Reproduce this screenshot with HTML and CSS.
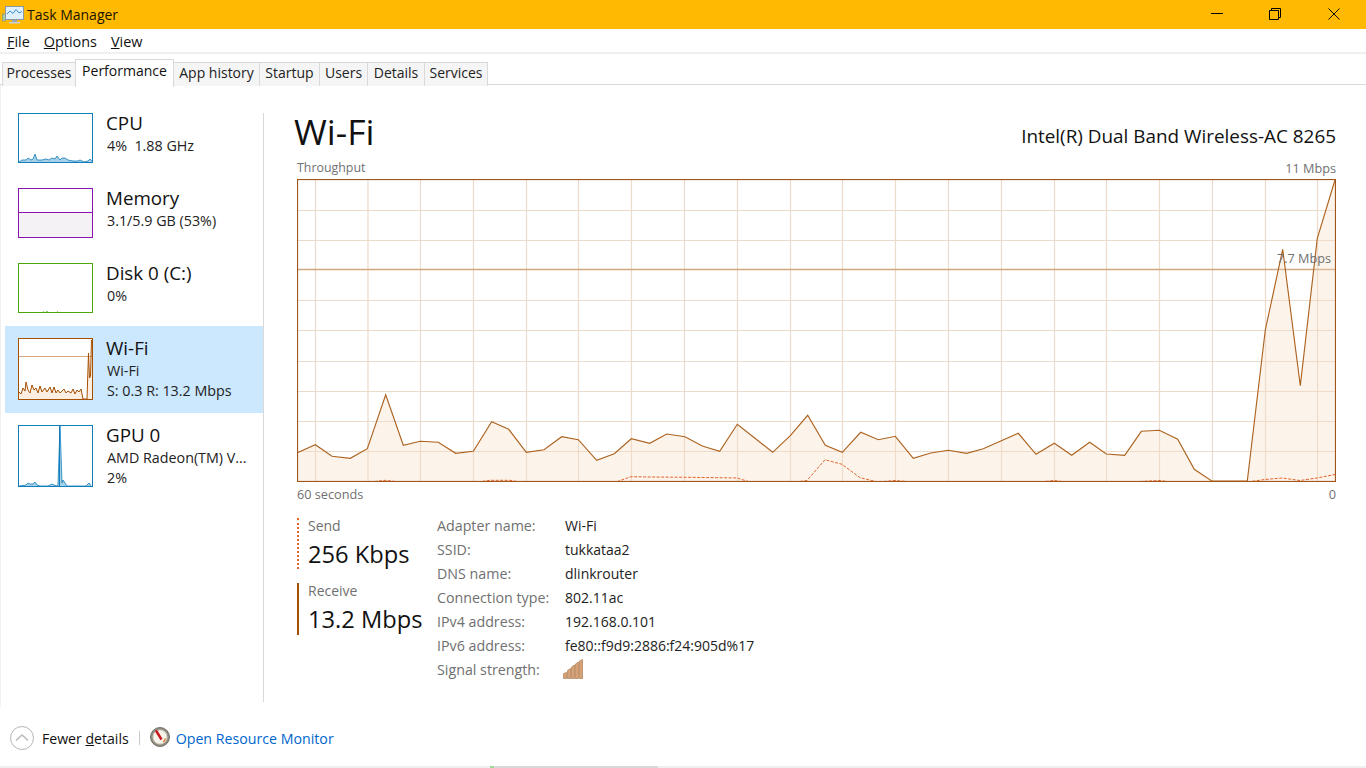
FILE: index.html
```html
<!DOCTYPE html>
<html lang="en">
<head>
<meta charset="utf-8">
<title>Task Manager</title>
<link rel="stylesheet" href="styles.css">
</head>
<body>
<div class="app">
  <header class="titlebar">
    <svg class="appicon" width="22" height="20" viewBox="0 0 22 20">
      <rect x="0.5" y="9" width="3" height="7" fill="#a9c9a0" stroke="#7d8f80" stroke-width=".6"/>
      <rect x="3.5" y="1.5" width="18" height="13" fill="#dff0fb" stroke="#8b97a3"/>
      <polyline points="5,9 8,6 11,8.5 14,4.5 17,8 20,6.5" fill="none" stroke="#3a8fd0" stroke-width="1"/>
      <rect x="10" y="15" width="5" height="2" fill="#9aa6b0"/>
      <rect x="7" y="17" width="11" height="1.5" fill="#c9d2d8"/>
    </svg>
    <span class="apptitle">Task Manager</span>
    <div class="wincontrols">
      <button class="winbtn" aria-label="Minimize"><svg width="12" height="12" viewBox="0 0 12 12"><path d="M0 5.5h12" stroke="#000" fill="none"/></svg></button>
      <button class="winbtn restore" aria-label="Restore"><svg width="12" height="12" viewBox="0 0 12 12"><path d="M.5 2.5h9v9h-9zM2.5 2.5v-2h9v9h-2" stroke="#000" fill="none"/></svg></button>
      <button class="winbtn" aria-label="Close"><svg width="12" height="12" viewBox="0 0 12 12"><path d="M.5.5l11 11M11.5.5l-11 11" stroke="#000" fill="none"/></svg></button>
    </div>
  </header>

  <nav class="menubar">
    <span><u>F</u>ile</span><span><u>O</u>ptions</span><span><u>V</u>iew</span>
  </nav>

  <div class="tabs">
    <div class="tab">Processes</div>
    <div class="tab active">Performance</div>
    <div class="tab">App history</div>
    <div class="tab">Startup</div>
    <div class="tab">Users</div>
    <div class="tab">Details</div>
    <div class="tab">Services</div>
  </div>

  <main class="main">
    <aside class="sidebar">
      <div class="item">
        <svg class="thumb" width="75" height="50" viewBox="0 0 75 50">
          <polygon class="cpu-fill" points="1,49 4,47 8,47 10,45 13,47 15,46 17,41 19,47 24,47 28,46 31,47 34,45 37,46 39,43 42,47 44,45 47,45 50,47 55,48 60,48 62,47 66,49 70,48 72,46 74,48 74,49"/>
          <polyline class="cpu-line" points="1,49 4,47 8,47 10,45 13,47 15,46 17,41 19,47 24,47 28,46 31,47 34,45 37,46 39,43 42,47 44,45 47,45 50,47 55,48 60,48 62,47 66,49 70,48 72,46 74,48"/>
          <rect class="cpu-frame" x=".5" y=".5" width="74" height="49"/>
        </svg>
        <div class="itemtext"><div class="itemtitle">CPU</div><div class="itemsub">4%&nbsp; 1.88 GHz</div></div>
      </div>
      <div class="item">
        <svg class="thumb" width="75" height="50" viewBox="0 0 75 50">
          <rect class="mem-fill" x="1" y="24" width="73" height="25"/>
          <path class="mem-line" d="M1 24.5h73"/>
          <rect class="mem-frame" x=".5" y=".5" width="74" height="49"/>
        </svg>
        <div class="itemtext"><div class="itemtitle">Memory</div><div class="itemsub">3.1/5.9 GB (53%)</div></div>
      </div>
      <div class="item">
        <svg class="thumb" width="75" height="50" viewBox="0 0 75 50">
          <path class="disk-line" d="M25 48.5h1M28 48.5h2M39 48.5h1"/>
          <rect class="disk-frame" x=".5" y=".5" width="74" height="49"/>
        </svg>
        <div class="itemtext"><div class="itemtitle">Disk 0 (C:)</div><div class="itemsub">0%</div></div>
      </div>
      <div class="item selected">
        <svg class="thumb" width="75" height="62" viewBox="0 0 75 62">
          <rect class="wifi-bg" x="1" y="1" width="73" height="60"/>
          <polygon class="wifi-fill" points="1,54 3,56 5,50 7,53 8,44 10,52 12,55 14,47 16,52 18,50 20,55 22,48 24,54 27,50 29,54 32,49 34,55 36,49 38,55 40,52 42,55 44,53 46,51 48,55 50,53 53,55 55,51 57,56 59,52 61,54 63,51 65,61 69,61 70.5,15 71.5,40 72.5,38 73.5,2 74,61 1,61"/>
          <path class="wifi-limit" d="M1 18.5h73"/>
          <polyline class="wifi-line" points="1,54 3,56 5,50 7,53 8,44 10,52 12,55 14,47 16,52 18,50 20,55 22,48 24,54 27,50 29,54 32,49 34,55 36,49 38,55 40,52 42,55 44,53 46,51 48,55 50,53 53,55 55,51 57,56 59,52 61,54 63,51 65,61 69,61 70.5,15 71.5,40 72.5,38 73.5,2"/>
          <rect class="wifi-frame" x=".5" y=".5" width="74" height="61"/>
        </svg>
        <div class="itemtext"><div class="itemtitle">Wi-Fi</div><div class="itemsub">Wi-Fi</div><div class="itemsub">S: 0.3 R: 13.2 Mbps</div></div>
      </div>
      <div class="item tall">
        <svg class="thumb" width="75" height="62" viewBox="0 0 75 62">
          <polygon class="cpu-fill" points="1,61 8,60 10,58 12,59 15,59 17,57 19,60 22,61 30,61 34,59 36,60 39,61 40,60 42,1 44,58 45,55 47,58 49,61 68,61 71,58 73,61"/>
          <polyline class="cpu-line" points="1,61 8,60 10,58 12,59 15,59 17,57 19,60 22,61 30,61 34,59 36,60 39,61 40,60 42,1 44,58 45,55 47,58 49,61 68,61 71,58 73,61"/>
          <path class="cpu-tick" d="M41.5 1v60"/>
          <rect class="cpu-frame" x=".5" y=".5" width="74" height="61"/>
        </svg>
        <div class="itemtext"><div class="itemtitle">GPU 0</div><div class="itemsub">AMD Radeon(TM) V...</div><div class="itemsub">2%</div></div>
      </div>
    </aside>
    <div class="vsep"></div>

    <section class="content">
      <div class="head">
        <h1 class="bigtitle">Wi-Fi</h1>
        <div class="adapter">Intel(R) Dual Band Wireless-AC 8265</div>
      </div>
      <div class="axis axis-top"><span>Throughput</span><span>11 Mbps</span></div>
      <div class="chart">
        <svg class="chartsvg" width="1039" height="303" viewBox="297 179 1039 303">
          <g class="grid">
            <path d="M315.5 180v301M368 180v301M420.5 180v301M473.5 180v301M526.5 180v301M578.5 180v301M631.5 180v301M684.5 180v301M737.5 180v301M790.5 180v301M842.5 180v301M895.5 180v301M948.5 180v301M1001.5 180v301M1054.5 180v301M1106.5 180v301M1159.5 180v301M1212.5 180v301M1265.5 180v301M1317.5 180v301"/>
            <path d="M298 210.5h1037M298 240.5h1037M298 300.5h1037M298 330.5h1037M298 361.5h1037M298 391.5h1037M298 421.5h1037M298 451.5h1037"/>
          </g>
          <path class="limit" d="M298 269.5h1037"/>
          <polygon class="area" points="297.3,452.7 315.3,444.7 332,456.3 350.3,458.3 367.3,448.7 385.7,394.7 403.3,445.3 420.3,441.3 438.3,442.3 455.7,453.3 473.3,451.3 491.7,421.7 508.7,429.3 526.3,452.3 544,449.7 561.7,436.7 578.3,439.7 596.7,460.3 614.3,453.7 631.3,438.7 649.7,443.3 666.7,434 685,436.7 702.3,446 719.7,451.3 737.3,424.3 755,438.3 772.7,452.3 790.3,435.7 807.7,415.3 825.3,445.3 842.3,452.3 860.7,432.3 878.3,439.7 895.3,436.3 913.3,458.3 930.7,453 948.3,450.3 966.7,453.3 983.3,448.7 1001.3,440.7 1018.3,433.3 1036,454.3 1054.3,443.3 1071.7,455.3 1089.7,442.3 1106.3,454 1124.7,455.3 1141.3,431.3 1159.3,430.3 1177.7,439.3 1194.3,469.3 1211.7,481 1247.3,481 1265.3,330 1282.7,249.3 1300.3,385.7 1317.3,238.3 1335,180 1335,481 297.3,481"/>
          <polyline class="recv" points="297.3,452.7 315.3,444.7 332,456.3 350.3,458.3 367.3,448.7 385.7,394.7 403.3,445.3 420.3,441.3 438.3,442.3 455.7,453.3 473.3,451.3 491.7,421.7 508.7,429.3 526.3,452.3 544,449.7 561.7,436.7 578.3,439.7 596.7,460.3 614.3,453.7 631.3,438.7 649.7,443.3 666.7,434 685,436.7 702.3,446 719.7,451.3 737.3,424.3 755,438.3 772.7,452.3 790.3,435.7 807.7,415.3 825.3,445.3 842.3,452.3 860.7,432.3 878.3,439.7 895.3,436.3 913.3,458.3 930.7,453 948.3,450.3 966.7,453.3 983.3,448.7 1001.3,440.7 1018.3,433.3 1036,454.3 1054.3,443.3 1071.7,455.3 1089.7,442.3 1106.3,454 1124.7,455.3 1141.3,431.3 1159.3,430.3 1177.7,439.3 1194.3,469.3 1211.7,481 1247.3,481 1265.3,330 1282.7,249.3 1300.3,385.7 1317.3,238.3 1335,180"/>
          <polyline class="send" points="370,482 385,480.3 400,482 478,482 490,480.3 510,480.3 520,482 616,482 631,476.7 650,477 690,477.3 737,478 750,482 796,482 807,480.5 825,459.7 842,464.3 860,477.7 878,482 895,480.5 913,482 1040,482 1054,480.5 1066,482 1130,482 1159,480.5 1172,482 1247,482 1265,479.5 1282,478 1300,480.5 1317,478 1335,474.5"/>
          <rect class="frame" x="297.5" y="179.5" width="1038" height="302"/>
        </svg>
        <span class="limitlabel">7.7 Mbps</span>
      </div>
      <div class="axis axis-bottom"><span>60 seconds</span><span>0</span></div>

      <div class="stats">
        <div class="rates">
          <div class="rate send-rate"><div class="ratelabel">Send</div><div class="ratevalue">256 Kbps</div></div>
          <div class="rate recv-rate"><div class="ratelabel">Receive</div><div class="ratevalue">13.2 Mbps</div></div>
        </div>
        <dl class="info">
          <dt>Adapter name:</dt><dd>Wi-Fi</dd>
          <dt>SSID:</dt><dd>tukkataa2</dd>
          <dt>DNS name:</dt><dd>dlinkrouter</dd>
          <dt>Connection type:</dt><dd>802.11ac</dd>
          <dt>IPv4 address:</dt><dd>192.168.0.101</dd>
          <dt>IPv6 address:</dt><dd>fe80::f9d9:2886:f24:905d%17</dd>
          <dt>Signal strength:</dt>
          <dd>
            <svg class="signal" width="20" height="20" viewBox="0 0 20 20">
              <path class="sigbar" d="M.5 14.5l3-1v6h-3zM4.5 11.5l3-2v10h-3zM8.5 8l3-2v13.500h-3zM12.500 5l3-2v16.500h-3zM16.500 2l3-1.500v19h-3z"/>
            </svg>
          </dd>
        </dl>
      </div>
    </section>
  </main>

  <footer class="footer">
    <svg class="chev" width="24" height="24" viewBox="0 0 24 24">
      <circle cx="12" cy="12" r="11.500" fill="#fff" stroke="#b4b4b4"/>
      <path d="M6 14.500L12 9l6 5.500" fill="none" stroke="#b8b8b8" stroke-width="1.500"/>
    </svg>
    <span class="fewer">Fewer <u>d</u>etails</span>
    <span class="footsep"></span>
    <svg class="gauge" width="20" height="20" viewBox="0 0 20 20">
      <circle cx="10" cy="10" r="9.500" fill="#8f8b80" stroke="#77736a"/>
      <circle cx="10" cy="10" r="7" fill="#f6f3ea" stroke="#d8d4c8"/>
      <path d="M6 3.500l5.500 9" stroke="#c8141e" stroke-width="2.400"/>
      <path d="M15.500 11.500a6 6 0 0 1-2.500 3.500" fill="none" stroke="#e08030" stroke-width="1.400"/>
    </svg>
    <a class="resmon" href="#">Open Resource Monitor</a>
  </footer>
  <div class="strip"><span class="stripgreen"></span><span class="stripgray"></span></div>
</div>
</body>
</html>
```
FILE: styles.css
```css
* { box-sizing: border-box; }
html, body { margin: 0; padding: 0; background: #fff; overflow: hidden; }
body { font-family: "Open Sans", "Noto Sans", "Liberation Sans", sans-serif; color: #000; }
.app { width: 1366px; height: 768px; display: flex; flex-direction: column; }

.titlebar { height: 29px; background: #ffb900; display: flex; align-items: center; padding-left: 2px; flex: none; }
.appicon { flex: none; }
.apptitle { margin-left: 3px; font-size: 14px; line-height: 29px; color: #1a1200; }
.wincontrols { margin-left: auto; display: flex; padding-right: 3px; }
.winbtn { width: 58px; height: 28px; padding: 0; border: 0; background: none; display: flex; align-items: center; justify-content: center; margin-bottom: 1px; }
.winbtn.restore { margin-right: 1px; padding-right: 1px; }

.menubar { height: 23px; display: flex; gap: 14px; padding-left: 7px; font-size: 14.4px; line-height: 25px; flex: none; color: #111; }

.tabs { height: 33px; padding: 5px 0 0 3px; display: grid; grid-template-columns: 73px 98px 86px 60px 48px 57px 63px; justify-content: start; align-items: end; border-top: 2px solid #f0f0f0; border-bottom: 1px solid #d9d9d9; flex: none; }
.tab { height: 24px; margin-left: -1px; background: #f5f5f5; border: 1px solid #d9d9d9; border-bottom: 0; font-size: 14px; line-height: 20px; text-align: center; color: #222; white-space: nowrap; }
.tab.active { height: 28px; background: #fff; line-height: 21px; margin-bottom: -1px; position: relative; color: #111; align-self: end; }

.main { flex: 1; min-height: 0; display: flex; padding-top: 16px; border-left: 1px solid #f0f0f0; }
.sidebar { width: 262px; flex: none; padding-left: 4px; }
.item { height: 75px; display: flex; gap: 14px; padding: 12px 0 0 13px; }
.item.selected { height: 87px; background: #cce8ff; }
.item.tall { height: 87px; }
.thumb { display: block; flex: none; }
.itemtext { margin-top: -2px; white-space: nowrap; }
.itemtitle { font-size: 18.8px; line-height: 24px; color: #111; margin-left: -1px; }
.itemsub { font-size: 14.3px; line-height: 21px; color: #222; }
.itemsub + .itemsub { margin-top: -1px; }

.cpu-frame, .cpu-line, .cpu-tick { fill: none; stroke: #117dbb; }
.cpu-line { stroke-width: .8; }
.cpu-fill { fill: #a8d0e8; }
.mem-frame { fill: none; stroke: #8b12ae; }
.mem-line { stroke: #8b12ae; }
.mem-fill { fill: #f4f2f4; }
.disk-frame { fill: none; stroke: #4da60c; }
.disk-line { stroke: #9cc87a; }
.wifi-bg { fill: #fff; }
.wifi-frame { fill: none; stroke: #a74f01; }
.wifi-line { fill: none; stroke: #a74f01; stroke-width: 1; }
.wifi-limit { stroke: #d6aa80; }
.wifi-fill { fill: #fcefe2; }

.vsep { width: 1px; margin: 12px 0 5px; background: #d9d9d9; flex: none; }

.content { width: 1039px; margin-left: 33px; flex: none; }
.head { display: flex; justify-content: space-between; align-items: flex-start; margin-top: 7px; height: 47px; }
.bigtitle { margin: 0 0 0 -3px; font-size: 35.5px; font-weight: 400; line-height: 46px; color: #111; }
.adapter { font-size: 18.9px; line-height: 24px; margin-top: 16px; color: #111; }

.axis { display: flex; justify-content: space-between; font-size: 12.7px; line-height: 16px; color: #707070; }
.axis-top { margin-top: 5px; margin-bottom: 3px; }
.axis-top span:first-child { font-size: 12.4px; }
.axis-bottom { margin-top: 4px; }

.chart { position: relative; height: 303px; }
.chartsvg { display: block; }
.grid path { fill: none; stroke: #ecdacb; stroke-width: 1.2; }
.limit { fill: none; stroke: #cfa680; stroke-width: 1.5; }
.area { fill: #f5dcc0; fill-opacity: .32; }
.recv { fill: none; stroke: #ad6320; stroke-width: 1.15; }
.send { fill: none; stroke: #e4632a; stroke-width: 1; stroke-dasharray: 3 1.5; }
.frame { fill: none; stroke: #a0561a; stroke-width: 1.2; }
.limitlabel { position: absolute; right: 5px; top: 71px; font-size: 12.7px; line-height: 16px; color: #707070; }

.stats { display: flex; margin-top: 16px; }
.rates { width: 140px; flex: none; display: flex; flex-direction: column; gap: 14px; }
.rate { height: 51px; padding-left: 9px; }
.send-rate { border-left: 2px dotted #e4632a; }
.recv-rate { border-left: 2px solid #a74f01; height: 52px; }
.ratelabel { font-size: 14px; line-height: 16px; color: #707070; }
.ratevalue { font-size: 23.7px; line-height: 32px; margin-top: 4px; color: #111; white-space: nowrap; }

.info { margin: -4px 0 0; display: grid; grid-template-columns: 128px auto; grid-auto-rows: 24px; font-size: 14px; line-height: 24px; }
.info dt { color: #707070; font-size: 14.25px; }
.info dd { margin: 0; color: #222; }
.signal { display: block; margin: 1px 0 0 -2px; }
.sigbar { fill: #d5a27a; stroke: #c39670; stroke-width: 1; }

.footer { height: 59px; flex: none; display: flex; align-items: center; padding: 3px 0 0 10px; }
.chev { flex: none; margin-top: -1px; }
.fewer { margin-left: 8px; font-size: 14.1px; color: #111; }
.footsep { width: 1px; height: 14px; background: #c8c8c8; margin: 0 10px; flex: none; }
.gauge { flex: none; margin-top: -2px; }
.resmon { margin-left: 6px; font-size: 14.2px; color: #0066cc; text-decoration: none; }

.strip { height: 2px; flex: none; background: #efefef; display: flex; padding-left: 490px; }
.stripgreen { width: 4px; background: #9ed89a; }
.stripgray { width: 164px; background: #d8d8d8; }
```
